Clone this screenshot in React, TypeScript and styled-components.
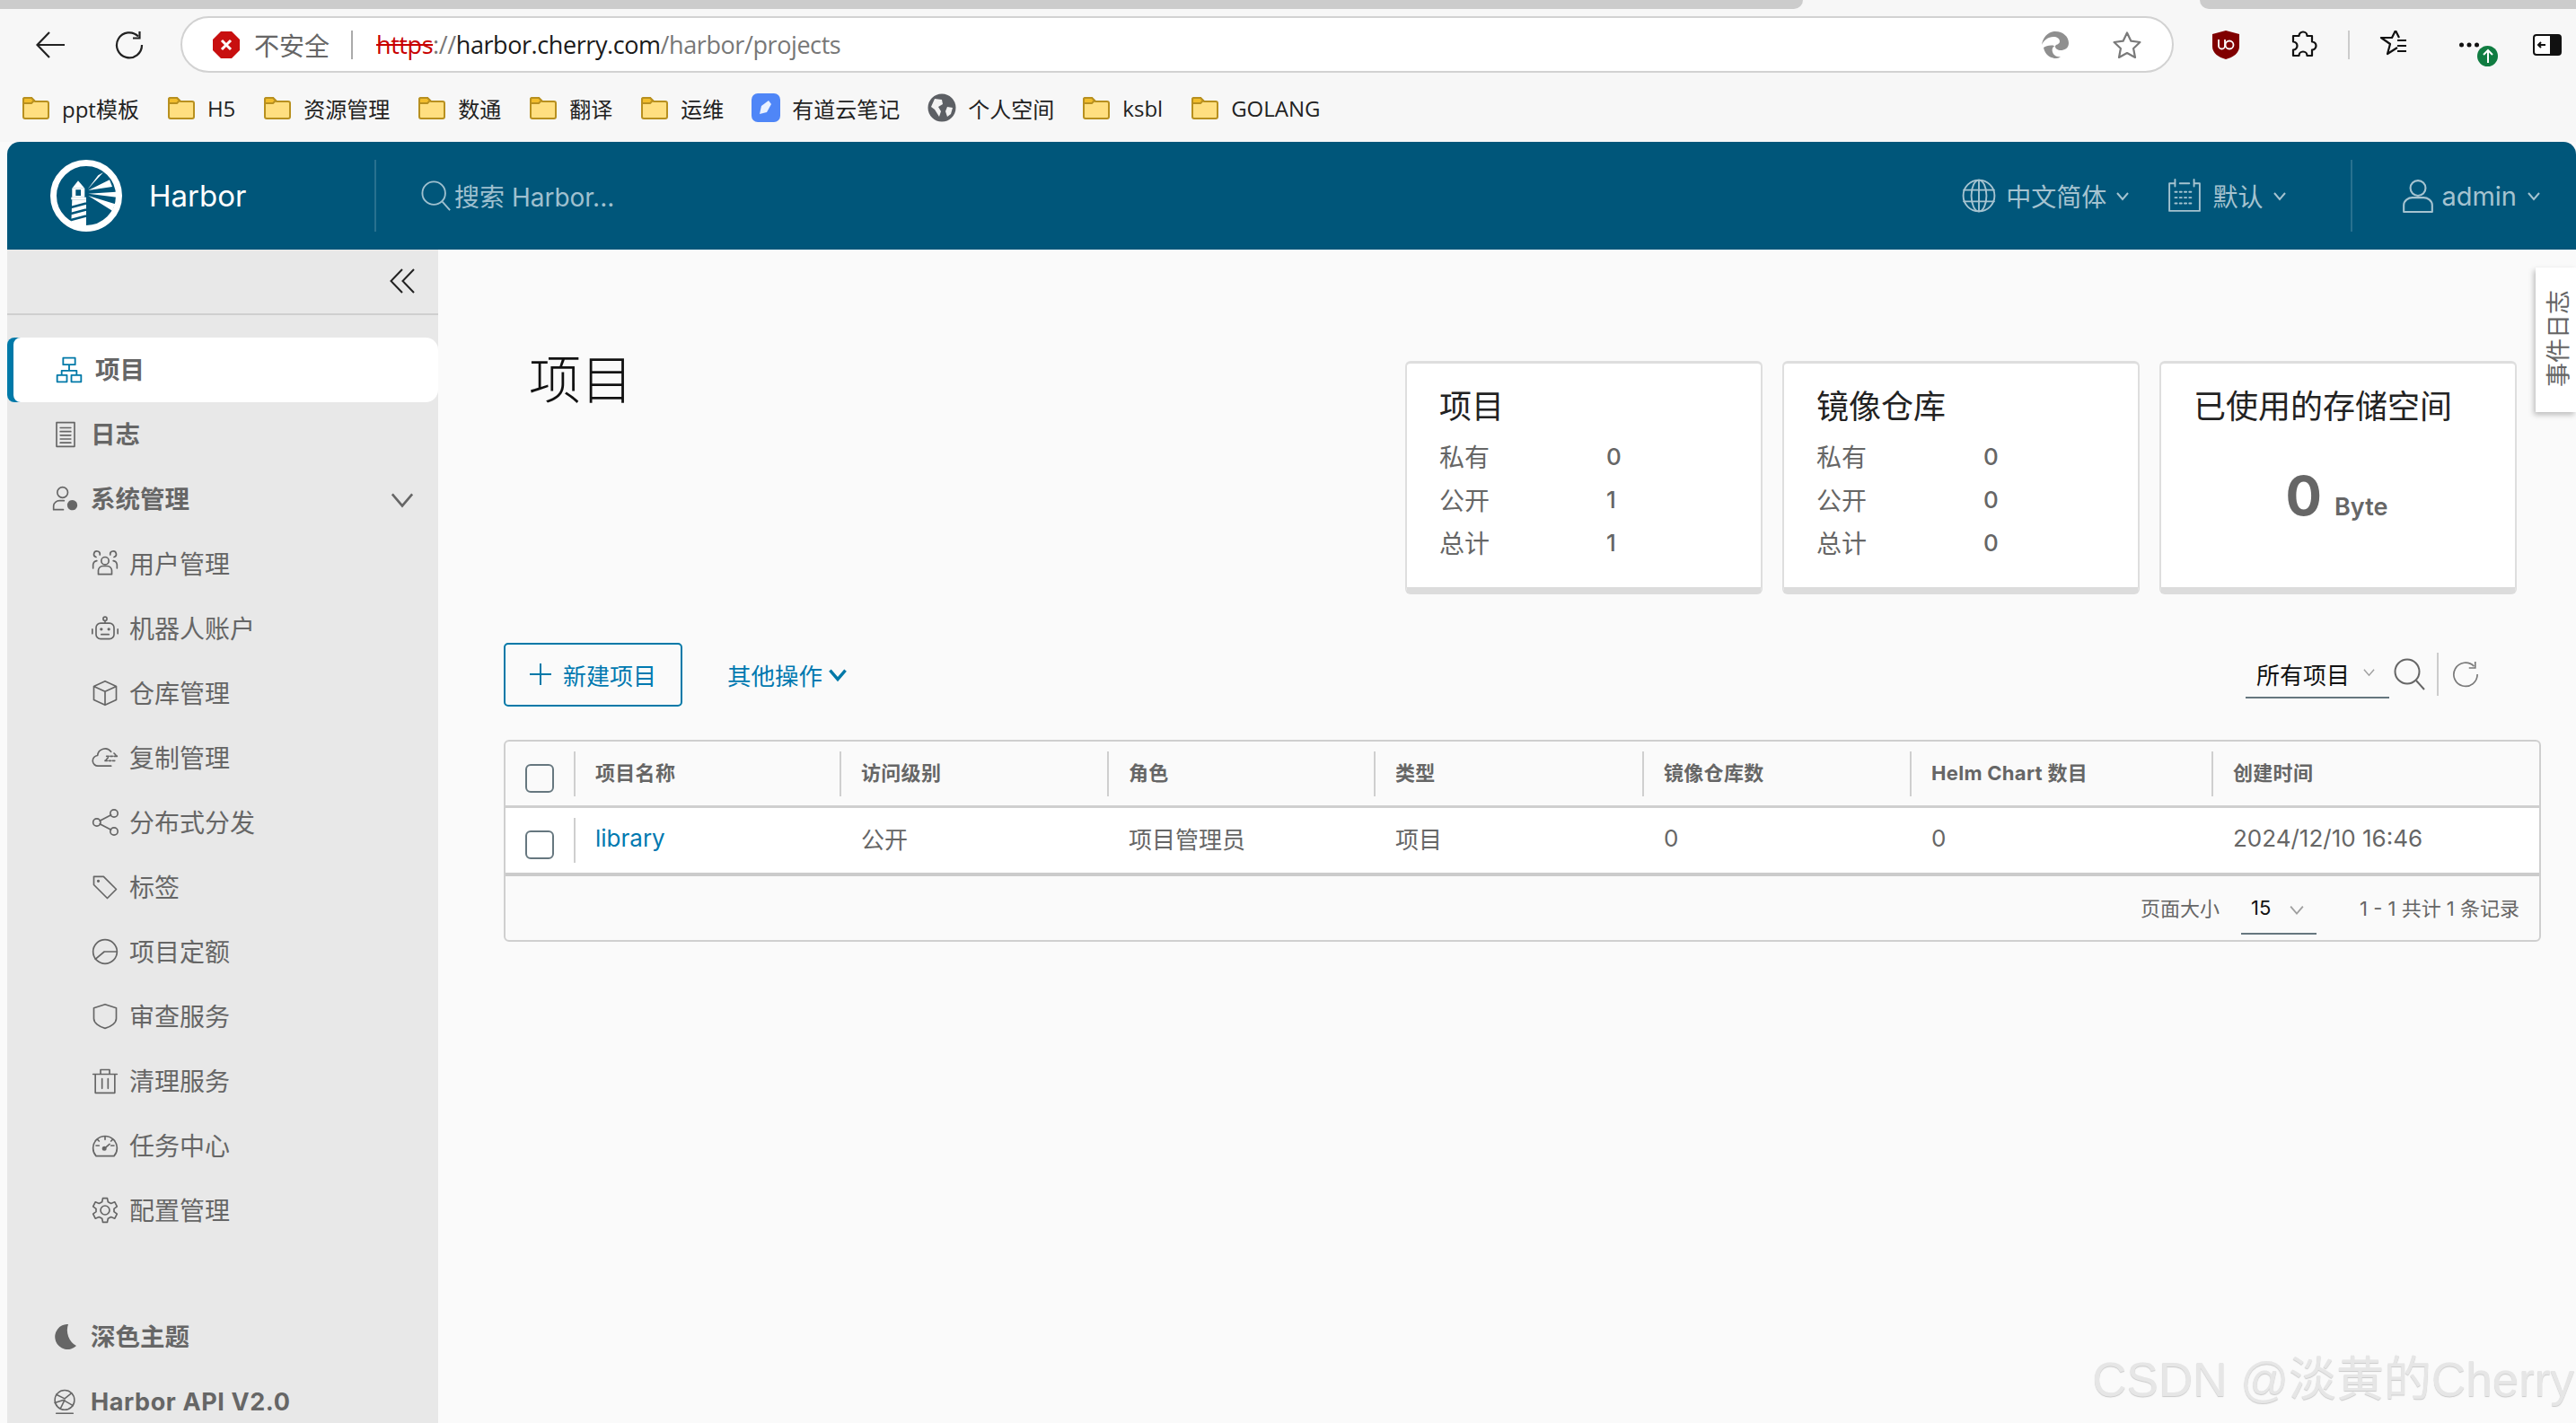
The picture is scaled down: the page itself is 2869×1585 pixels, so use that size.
import React from 'react';
import styled, { createGlobalStyle } from 'styled-components';

const GlobalStyle = createGlobalStyle`
  html, body {
    margin: 0;
    padding: 0;
    background: #fafafa;
    overflow: hidden;
  }
  * {
    box-sizing: border-box;
  }
  body {
    font-family: 'Inter', 'Noto Sans CJK SC', sans-serif;
  }
`;

const ui = `'Open Sans', 'Noto Sans CJK SC', sans-serif`;
const metro = `'Inter', 'Noto Sans CJK SC', sans-serif`;

/* ---- icons ---- */

type IconProps = { size?: number; color?: string };

const Svg = ({ size = 28, color = '#666', children, box = '0 0 36 36', sw = 2 }: IconProps & { children: React.ReactNode; box?: string; sw?: number }) => (
  <svg width={size} height={size} viewBox={box} fill="none" stroke={color} strokeWidth={sw} strokeLinecap="round" strokeLinejoin="round" style={{ flexShrink: 0 }}>
    {children}
  </svg>
);

const Chevron = ({ size = 14, color = '#a5c3d0', sw = 2 }: IconProps & { sw?: number }) => (
  <svg width={size} height={size} viewBox="0 0 14 14" fill="none" stroke={color} strokeWidth={sw} style={{ flexShrink: 0 }}>
    <path d="M1 4l6 7 6-7" />
  </svg>
);

const Folder = () => (
  <svg width="32" height="28" viewBox="0 0 32 28" style={{ flexShrink: 0 }}>
    <path d="M2 5a2 2 0 0 1 2-2h7l4 4h13a2 2 0 0 1 2 2v15a2 2 0 0 1-2 2H4a2 2 0 0 1-2-2z" fill="#ffdf80" stroke="#b8901f" strokeWidth="2" />
    <path d="M2 5a2 2 0 0 1 2-2h7l3 3-3 3H2z" fill="#f2bd2c" stroke="#b8901f" strokeWidth="2" />
  </svg>
);

const Youdao = () => (
  <svg width="32" height="32" viewBox="0 0 32 32" style={{ flexShrink: 0 }}>
    <rect width="32" height="32" rx="7" fill="#4f86f7" />
    <path d="M9 23l2-9 8-6 3 4-5 9z" fill="#eaf1ff" />
  </svg>
);

const GlobeBookmark = () => (
  <svg width="32" height="32" viewBox="0 0 32 32" style={{ flexShrink: 0 }}>
    <circle cx="16" cy="16" r="15.5" fill="#5c5f64" />
    <path d="M8 6l8 1 1 5-5 3 3 5-2 6-5-8-4-3zM22 15l6 1-2 7-4 3-2-6z" fill="#f2f2f2" />
  </svg>
);

const Logo = () => (
  <svg width="80" height="80" viewBox="0 0 80 80" style={{ flexShrink: 0 }}>
    <circle cx="40" cy="40" r="36.5" fill="none" stroke="#fff" strokeWidth="7" />
    <path d="M31 23.3l7.3 8.4H24.3z" fill="#fff" />
    <path fillRule="evenodd" d="M24.3 31.7h14v10h-14zM28.3 33.3V40H34v-6.700z" fill="#fff" />
    <rect x="23.300" y="41.700" width="16.700" height="2.600" fill="#fff" />
    <path d="M24.300 44.300H40V76l-16.700-5z" fill="#fff" />
    <path d="M23 53l17-4.500M23 60l17-4.500M23 67l17-4.500" stroke="#00567a" strokeWidth="2.600" />
    <path d="M41.700 32.700L53.300 17.300 59 14zM42.300 34L66 22.300 69 30zM42.300 37.700L73.300 35.700 74 41.700zM42.300 40L72.300 49.300 69 56.700z" fill="#fff" />
  </svg>
);

const SearchIcon = ({ size = 34, color = '#9fc0cf' }: IconProps) => (
  <svg width={size} height={size} viewBox="0 0 36 36" fill="none" stroke={color} strokeWidth="2" style={{ flexShrink: 0 }}>
    <circle cx="15" cy="15" r="13.5" />
    <path d="M25 25l9 10" />
  </svg>
);

const Refresh = ({ size = 32, color = '#222', sw = 2.2 }: IconProps & { sw?: number }) => (
  <svg width={size} height={size} viewBox="0 0 32 32" fill="none" stroke={color} strokeWidth={sw} style={{ flexShrink: 0 }}>
    <path d="M26 6.5A14 14 0 1 0 30 16" />
    <path d="M27.5 1v7.5H20" />
  </svg>
);

/* ---- browser chrome ---- */

const Browser = styled.div`
  background: #f7f7f7;
  height: 158px;
  display: flex;
  flex-direction: column;
`;

const TabStrip = styled.div`
  height: 10px;
  display: flex;
  justify-content: space-between;
`;

const TabEdge = styled.div<{ $w: number; $left?: boolean }>`
  width: ${(p) => p.$w}px;
  background: #cccccc;
  border-radius: ${(p) => (p.$left ? '0 0 0 10px' : '0 0 10px 0')};
`;

const Toolbar = styled.div`
  height: 63px;
  margin-top: 8px;
  display: flex;
  align-items: center;
  padding-left: 40px;
`;

const NavBtn = styled.div<{ $w: number }>`
  width: ${(p) => p.$w}px;
  display: flex;
`;

const AddressBar = styled.div`
  width: 2220px;
  height: 63px;
  background: #fff;
  border: 2px solid #d2d2d2;
  border-radius: 32px;
  display: flex;
  align-items: center;
  padding: 0 34px 0 34px;
  font-family: ${ui};
  font-size: 27px;
`;

const Insecure = styled.span`
  color: #666;
  font-size: 28px;
  margin-left: 16px;
  font-family: 'Noto Sans CJK SC', sans-serif;
  line-height: 1;
`;

const AddrSep = styled.div`
  width: 2px;
  height: 32px;
  background: #aaa;
  margin: 0 26px 0 24px;
`;

const Url = styled.div`
  flex: 1;
  color: #777;
  white-space: nowrap;
  letter-spacing: -0.42px;
`;

const UrlHttps = styled.s`
  color: #c80000;
`;

const UrlHost = styled.span`
  color: #1a1a1a;
`;

const AddrIcons = styled.div`
  display: flex;
  align-items: center;
  gap: 48px;
`;

const ExtIcons = styled.div`
  display: flex;
  align-items: center;
  margin-left: 43px;
`;

const ExtSlot = styled.div<{ $w: number }>`
  width: ${(p) => p.$w}px;
  display: flex;
  position: relative;
`;

const ToolSep = styled.div`
  width: 2px;
  height: 32px;
  background: #ccc;
  margin-right: 31px;
`;

const Badge = styled.div`
  position: absolute;
  left: 20px;
  top: 4px;
  width: 23px;
  height: 23px;
  border-radius: 50%;
  background: #107c41;
  display: flex;
  align-items: center;
  justify-content: center;
`;

const Bookmarks = styled.div`
  height: 42px;
  margin-top: 18px;
  display: flex;
  align-items: center;
  padding-left: 24px;
  gap: 31px;
`;

const Bookmark = styled.div`
  display: flex;
  align-items: center;
  gap: 13px;
  font-family: ${ui};
  font-size: 24px;
  color: #222;
  white-space: nowrap;
`;

/* ---- harbor header ---- */

const Page = styled.div`
  width: 2869px;
  height: 1585px;
  position: relative;
  overflow: hidden;
  background: #fafafa;
`;

const AppFrame = styled.div`
  margin-left: 8px;
  height: 1427px;
  display: flex;
  flex-direction: column;
`;

const Header = styled.header`
  height: 120px;
  flex-shrink: 0;
  background: #00567a;
  border-radius: 14px 14px 0 0;
  display: flex;
  align-items: center;
  padding-left: 48px;
  color: #a5c3d0;
`;

const Brand = styled.div`
  display: flex;
  align-items: center;
  gap: 30px;
  width: 361px;
  color: #fff;
  font-family: ${metro};
  font-size: 33px;
`;

const HeaderSep = styled.div`
  width: 2px;
  height: 80px;
  background: rgba(255, 255, 255, 0.16);
`;

const Search = styled.div`
  display: flex;
  align-items: center;
  gap: 3px;
  margin-left: 50px;
  flex: 1;
  font-family: ${metro};
  font-size: 28px;
  color: #9fc0cf;
`;

const HeaderItem = styled.div<{ $gap?: number; $start?: number; $size?: number; $inner?: number }>`
  display: flex;
  align-items: center;
  gap: ${(p) => p.$inner ?? 11}px;
  font-family: ${metro};
  font-size: ${(p) => p.$size ?? 28}px;
  margin-left: ${(p) => p.$start ?? 0}px;
  margin-right: ${(p) => p.$gap ?? 37}px;
`;

const HeaderCaret = styled.span`
  display: flex;
  margin-left: 5px;
`;

/* ---- sidebar ---- */

const Body = styled.div`
  flex: 1;
  display: flex;
  min-height: 0;
`;

const Sidebar = styled.aside`
  width: 480px;
  background: #e8e8e8;
  display: flex;
  flex-direction: column;
  overflow: hidden;
`;

const CollapseRow = styled.div`
  height: 73px;
  flex-shrink: 0;
  border-bottom: 2px solid #cfcfcf;
  display: flex;
  align-items: center;
  justify-content: flex-end;
  padding: 0 26px 2px 0;
`;

const NavList = styled.nav`
  padding-top: 25px;
  display: flex;
  flex-direction: column;
`;

const NavItem = styled.div<{ $active?: boolean; $sub?: boolean; $left?: number; $gap?: number }>`
  height: 72px;
  flex-shrink: 0;
  display: flex;
  align-items: center;
  gap: ${(p) => p.$gap ?? 14}px;
  padding-left: ${(p) => p.$left ?? 54}px;
  padding-right: 27px;
  font-family: 'Noto Sans CJK SC', sans-serif;
  font-size: ${(p) => (p.$sub ? 28 : 27.5)}px;
  font-weight: ${(p) => (p.$sub ? 400 : 700)};
  color: #666;
  background: ${(p) => (p.$active ? '#fff' : 'transparent')};
  border-radius: ${(p) => (p.$active ? '8px 14px 14px 8px' : '0')};
  box-shadow: ${(p) => (p.$active ? 'inset 7px 0 0 #0079a8' : 'none')};
`;

const NavLabel = styled.span`
  flex: 1;
  white-space: nowrap;
  line-height: 1;
  margin-top: -3px;
`;

const ApiLabel = styled(NavLabel)`
  font-family: ${metro};
  font-size: 27px;
  letter-spacing: 0.6px;
  margin-top: 0;
`;

const NavSpacer = styled.div`
  height: 69px;
  flex-shrink: 0;
`;

/* ---- main ---- */

const Main = styled.main`
  flex: 1;
  padding: 0 39px 0 73px;
  display: flex;
  flex-direction: column;
  position: relative;
`;

const TopRow = styled.div`
  display: flex;
  justify-content: space-between;
  align-items: flex-start;
  height: 437px;
  padding-top: 124px;
`;

const PageTitle = styled.h1`
  margin: -15px 0 0 28px;
  font-family: 'Noto Sans CJK SC', sans-serif;
  font-size: 58px;
  font-weight: 300;
  line-height: 64px;
  color: #111;
`;

const Cards = styled.div`
  display: flex;
  gap: 22px;
  margin-right: 27px;
`;

const Card = styled.section`
  width: 398px;
  height: 260px;
  background: #fff;
  border: 2px solid #dedede;
  border-top-width: 3px;
  border-bottom: 8px solid #dcdcdc;
  border-radius: 6px;
  padding: 23px 36px 0;
`;

const CardTitle = styled.div`
  font-family: 'Noto Sans CJK SC', sans-serif;
  font-size: 36px;
  line-height: 44px;
  font-weight: 400;
  color: #222;
  white-space: nowrap;
`;

const StatRows = styled.div`
  margin-top: 12px;
  display: grid;
  grid-template-columns: 186px 1fr;
  grid-auto-rows: 48px;
  align-items: center;
`;

const StatLabel = styled.div`
  font-family: 'Noto Sans CJK SC', sans-serif;
  font-size: 28px;
  color: #666;
`;

const StatValue = styled.div`
  font-family: ${metro};
  font-size: 26px;
  font-weight: 500;
  color: #666;
`;

const Storage = styled.div`
  display: flex;
  align-items: baseline;
  justify-content: center;
  gap: 14px;
  margin-top: 44px;
  padding-right: 3px;
  font-family: ${metro};
  color: #666;
`;

const StorageValue = styled.span`
  font-size: 60px;
  font-weight: 700;
`;

const StorageUnit = styled.span`
  font-size: 27px;
  font-weight: 600;
`;

const ActionRow = styled.div`
  height: 72px;
  display: flex;
  align-items: center;
`;

const NewButton = styled.button`
  width: 199px;
  height: 71px;
  background: transparent;
  border: 2px solid #0079a8;
  border-radius: 5px;
  display: flex;
  align-items: center;
  justify-content: center;
  gap: 13px;
  padding: 0;
  font-family: 'Noto Sans CJK SC', sans-serif;
  font-size: 26px;
  color: #0079b0;
`;

const MoreActions = styled.div`
  margin-left: 50px;
  display: flex;
  align-items: center;
  gap: 7px;
  font-family: 'Noto Sans CJK SC', sans-serif;
  font-size: 26.5px;
  color: #0079b0;
`;

const ActionSpacer = styled.div`
  flex: 1;
`;

const FilterSelect = styled.div`
  width: 160px;
  height: 46px;
  border-bottom: 2px solid #66777f;
  margin: 8px 5px 0 0;
  padding: 2px 0 0 12px;
  display: flex;
  align-items: flex-start;
  gap: 15px;
  font-family: 'Noto Sans CJK SC', sans-serif;
  font-size: 26px;
  line-height: 34px;
  color: #111;
`;

const ChevronWrap = styled.span`
  margin-top: 8px;
  display: flex;
`;

const ToolSepV = styled.div`
  width: 2px;
  height: 48px;
  background: #ccc;
  margin: 0 15px 0 12px;
`;

const ToolEnd = styled.div`
  width: 69px;
`;

const TableBox = styled.div`
  margin-top: 37px;
  height: 225px;
  border: 2px solid #cfcfcf;
  border-radius: 6px;
  display: flex;
  flex-direction: column;
  overflow: hidden;
`;

const columns = '76px 296px 298px 297px 299px 298px 336px 1fr';

const HeadRow = styled.div`
  height: 74px;
  display: grid;
  grid-template-columns: ${columns};
  align-items: center;
  border-bottom: 3px solid #cfcfcf;
`;

const DataRow = styled.div`
  height: 76px;
  display: grid;
  grid-template-columns: ${columns};
  align-items: center;
  background: #fff;
  border-bottom: 4px solid #cbcbcb;
`;

const CheckCell = styled.div`
  display: flex;
  justify-content: center;
  padding-top: 10px;
`;

const Check = styled.div`
  width: 32px;
  height: 32px;
  border: 2px solid #66777f;
  border-radius: 6px;
`;

const Cell = styled.div<{ $head?: boolean }>`
  height: 50px;
  border-left: 2px solid #cfcfcf;
  padding: 0 0 5px 22px;
  display: flex;
  align-items: center;
  white-space: nowrap;
  font-family: ${metro};
  font-size: ${(p) => (p.$head ? '22px' : '26px')};
  font-weight: ${(p) => (p.$head ? 700 : 400)};
  letter-spacing: ${(p) => (p.$head ? '0.3px' : '0')};
  color: #666;
`;

const PlainCell = styled(Cell)`
  border-left-color: transparent;
`;

const LinkText = styled.a`
  color: #0079b0;
`;

const Pager = styled.div`
  flex: 1;
  display: flex;
  align-items: center;
  justify-content: flex-end;
  padding: 0 22px 3px 0;
  font-family: ${metro};
  font-size: 22px;
  color: #666;
`;

const PageSelect = styled.div`
  width: 84px;
  height: 48px;
  margin: 13px 48px 0 24px;
  border-bottom: 2px solid #66777f;
  padding: 4px 0 0 11px;
  display: flex;
  align-items: flex-start;
  gap: 21px;
  color: #111;
  line-height: 28px;
`;

const EventTab = styled.div`
  position: absolute;
  right: 0;
  top: 298px;
  width: 45px;
  height: 161px;
  background: #fff;
  box-shadow: -2px 3px 6px rgba(0, 0, 0, 0.25);
  display: flex;
  align-items: center;
  justify-content: center;
`;

const EventText = styled.span`
  writing-mode: vertical-rl;
  text-orientation: sideways;
  transform: rotate(180deg);
  font-family: 'Noto Sans CJK SC', sans-serif;
  font-size: 27px;
  color: #666;
  white-space: nowrap;
  margin: 0 0 4px 2px;
`;

const Watermark = styled.div`
  position: absolute;
  right: 2px;
  top: 1505px;
  font-family: 'Liberation Sans', 'Noto Sans CJK SC', sans-serif;
  font-size: 53px;
  line-height: 64px;
  color: #e6e6e6;
  text-shadow: 0 1px 1px #c9c9c9;
  white-space: nowrap;
`;

/* ---- data ---- */

const subNav: [string, React.ReactNode][] = [
  ['用户管理', <><circle cx="18" cy="14" r="5" /><path d="M9 32v-5a6 6 0 0 1 6-6h6a6 6 0 0 1 6 6v5zM6 9a4 4 0 1 1 5-3M30 9a4 4 0 1 0-5-3M2 24v-5a6 6 0 0 1 5-5M34 24v-5a6 6 0 0 0-5-5" /></>],
  ['机器人账户', <><rect x="6" y="11" width="24" height="21" rx="6" /><circle cx="18" cy="5" r="2.5" /><path d="M18 8v3M13 26h10M1 19v6M35 19v6" /><circle cx="13" cy="19" r="1" /><circle cx="23" cy="19" r="1" /></>],
  ['仓库管理', <><path d="M18 2l15 7v18l-15 7-15-7V9zM3 9l15 7 15-7M18 16v18" /></>],
  ['复制管理', <><path d="M26 29H9a7 7 0 0 1-1-14 10 10 0 0 1 18-5" /><path d="M20 16h14M30 12l4 4M18 22h14M22 18l-4 4" strokeDasharray="3 2" /></>],
  ['分布式分发', <><circle cx="7" cy="18" r="5" /><circle cx="30" cy="6" r="5" /><circle cx="30" cy="30" r="5" /><path d="M11 16l15-8M11 20l15 8" /></>],
  ['标签', <><path d="M3 4h13l17 17-12 12L3 15z" /><circle cx="9" cy="10" r="1" /></>],
  ['项目定额', <><circle cx="18" cy="18" r="16" /><path d="M34 18H17l-12 10" /></>],
  ['审查服务', <><path d="M18 2l15 5v14c0 6-7 11-15 13-8-2-15-7-15-13V7z" /></>],
  ['清理服务', <><path d="M5 9h26v25H5zM2 9h32M12 9V3h12v6M14 15v13M22 15v13" /></>],
  ['任务中心', <><path d="M6 32a16 16 0 1 1 24 0z" /><path d="M18 6v4M6 18h4M26 18h4M8 10l2 2M28 10l-2 2M17 22l7-6" /><circle cx="17" cy="22" r="2" fill="#666" /></>],
  ['配置管理', <><circle cx="18" cy="18" r="6" /><path d="M15 2h6l1 5 4 2 5-2 3 6-4 3v4l4 3-3 6-5-2-4 2-1 5h-6l-1-5-4-2-5 2-3-6 4-3v-4l-4-3 3-6 5 2 4-2z" /></>],
];

const statRows = (a: string, b: string, c: string) => [
  ['私有', a],
  ['公开', b],
  ['总计', c],
];

const headers = ['项目名称', '访问级别', '角色', '类型', '镜像仓库数', 'Helm Chart 数目', '创建时间'];
const row = ['公开', '项目管理员', '项目', '0', '0', '2024/12/10 16:46'];
const bookmarks = ['ppt模板', 'H5', '资源管理', '数通', '翻译', '运维'];

const StatCard = ({ title, values }: { title: string; values: string[][] }) => (
  <Card>
    <CardTitle>{title}</CardTitle>
    <StatRows>
      {values.map(([label, value]) => (
        <React.Fragment key={label}>
          <StatLabel>{label}</StatLabel>
          <StatValue>{value}</StatValue>
        </React.Fragment>
      ))}
    </StatRows>
  </Card>
);

function App() {
  return (
    <Page>
      <GlobalStyle />
      <Browser>
        <TabStrip>
          <TabEdge $w={2008} />
          <TabEdge $w={419} $left />
        </TabStrip>
        <Toolbar>
          <NavBtn $w={88}>
            <svg width="32" height="30" viewBox="0 0 32 30" fill="none" stroke="#222" strokeWidth="2.2">
              <path d="M32 15H2M15 1L1.5 15 15 29" />
            </svg>
          </NavBtn>
          <NavBtn $w={73}>
            <Refresh />
          </NavBtn>
          <AddressBar>
            <svg width="30" height="30" viewBox="0 0 30 30">
              <path d="M9 0h12l9 9v12l-9 9H9l-9-9V9z" fill="#c80f0f" />
              <path d="M10 10l10 10M20 10L10 20" stroke="#fff" strokeWidth="3" />
            </svg>
            <Insecure>不安全</Insecure>
            <AddrSep />
            <Url>
              <UrlHttps>https</UrlHttps>://<UrlHost>harbor.cherry.com</UrlHost>/harbor/projects
            </Url>
            <AddrIcons>
              <svg width="32" height="32" viewBox="0 0 32 32">
                <path d="M16 1c9 0 15 6 15 13 0 6-5 8-9 8-3 0-6-2-6-4 0-3 5-2 5-6 0-3-3-5-7-5C8 7 3 11 1 16 2 8 8 1 16 1z" fill="#8f8f8f" />
                <path d="M3 19c1 6 6 12 14 12 2 0 4-1 5-2-5 1-8-2-9-5-1-3 0-6 3-7-6-1-10 0-13 2z" fill="#8f8f8f" />
              </svg>
              <svg width="32" height="30" viewBox="0 0 32 30" fill="none" stroke="#7a7a7a" strokeWidth="2.2" strokeLinejoin="round">
                <path d="M16 1.5l4.4 9.2 10 1.3-7.3 7 1.9 10L16 24l-9 5 1.9-10-7.3-7 10-1.3z" />
              </svg>
            </AddrIcons>
          </AddressBar>
          <ExtIcons>
            <ExtSlot $w={87}>
              <svg width="30" height="32" viewBox="0 0 30 32">
                <path d="M15 0l15 4v14c0 7-7 12-15 14C7 30 0 25 0 18V4z" fill="#800000" />
                <path d="M7 10v7a3.500 3.500 0 0 0 7 0v-7" fill="none" stroke="#fff" strokeWidth="1.800" />
                <circle cx="19" cy="16" r="4.500" fill="none" stroke="#fff" strokeWidth="1.800" />
              </svg>
            </ExtSlot>
            <ExtSlot $w={64}>
              <svg width="30" height="32" viewBox="0 0 30 32" fill="none" stroke="#111" strokeWidth="2.2" strokeLinejoin="round">
                <path d="M3 6h6.500a4.500 4.500 0 1 1 9 0H24v6.500a4.500 4.500 0 1 1 0 9V28h-5.500a4.500 4.500 0 1 0-9 0H3v-6.500a4.500 4.500 0 1 0 0-9z" />
              </svg>
            </ExtSlot>
            <ToolSep />
            <ExtSlot $w={91}>
              <svg width="34" height="32" viewBox="0 0 34 32" fill="none" stroke="#111" strokeWidth="2.2" strokeLinejoin="round">
                <path d="M22 19l-11 7 3-11-10-7h12l4-8 4 8" />
                <path d="M22 11h10M22 17h10M22 23h10" />
              </svg>
            </ExtSlot>
            <ExtSlot $w={82}>
              <svg width="22" height="6" viewBox="0 0 22 6" fill="#111">
                <circle cx="2.500" cy="3" r="2.500" />
                <circle cx="11" cy="3" r="2.500" />
                <circle cx="19.500" cy="3" r="2.500" />
              </svg>
              <Badge>
                <svg width="12" height="16" viewBox="0 0 12 16" fill="none" stroke="#fff" strokeWidth="2">
                  <path d="M6 16V2M1 7l5-5 5 5" />
                </svg>
              </Badge>
            </ExtSlot>
            <svg width="32" height="24" viewBox="0 0 32 24">
              <rect x="1" y="1" width="30" height="22" rx="3" fill="#fff" stroke="#111" strokeWidth="2" />
              <path d="M19 1h9a3 3 0 0 1 3 3v16a3 3 0 0 1-3 3h-9z" fill="#111" />
              <path d="M14 12H6M9 9l-3 3 3 3" fill="none" stroke="#111" strokeWidth="2" />
            </svg>
          </ExtIcons>
        </Toolbar>
        <Bookmarks>
          {bookmarks.map((name) => (
            <Bookmark key={name}>
              <Folder />
              {name}
            </Bookmark>
          ))}
          <Bookmark>
            <Youdao />
            有道云笔记
          </Bookmark>
          <Bookmark>
            <GlobeBookmark />
            个人空间
          </Bookmark>
          <Bookmark>
            <Folder />
            ksbl
          </Bookmark>
          <Bookmark>
            <Folder />
            GOLANG
          </Bookmark>
        </Bookmarks>
      </Browser>

      <AppFrame>
        <Header>
          <Brand>
            <Logo />
            Harbor
          </Brand>
          <HeaderSep />
          <Search>
            <SearchIcon />
            搜索 Harbor...
          </Search>
          <HeaderItem $gap={43}>
            <Svg size={38} color="#a5c3d0" sw={1.8}>
              <circle cx="18" cy="18" r="16.5" />
              <ellipse cx="18" cy="18" rx="8" ry="16.5" />
              <path d="M18 1.500v33M2 12h32M2 24h32" />
            </Svg>
            中文简体
            <Chevron />
          </HeaderItem>
          <HeaderItem $gap={72} $inner={12}>
            <Svg size={38} color="#a5c3d0" sw={1.8}>
              <path d="M8 5H2v29h32V5h-6M13 5h10M8 1v7M28 1v7" />
              <path d="M8 14h20M8 20h20M8 26h20" strokeDasharray="2 3" />
            </Svg>
            默认
            <Chevron />
          </HeaderItem>
          <HeaderSep />
          <HeaderItem $gap={40} $start={54} $size={29} $inner={7}>
            <Svg size={38} color="#a5c3d0" sw={2}>
              <circle cx="18" cy="10" r="8" />
              <path d="M3 35v-7c0-5 5-8 9-8h12c4 0 9 3 9 8v7z" />
            </Svg>
            admin
            <HeaderCaret>
              <Chevron />
            </HeaderCaret>
          </HeaderItem>
        </Header>

        <Body>
          <Sidebar>
            <CollapseRow>
              <svg width="28" height="28" viewBox="0 0 28 28" fill="none" stroke="#222" strokeWidth="2">
                <path d="M14 1L1.500 14 14 27M27 1L14.500 14 27 27" />
              </svg>
            </CollapseRow>
            <NavList>
              <NavItem $active>
                <Svg size={30} color="#0079a8" sw={2.2}>
                  <path d="M10 2h16v9H10zM2 25h13v9H2zM21 25h13v9H21zM18 11v8M8 25v-6h20v6" />
                </Svg>
                <NavLabel>项目</NavLabel>
              </NavItem>
              <NavItem $left={50} $gap={13}>
                <Svg size={30} sw={2}>
                  <path d="M6 2h24v32H6zM11 9h14M11 14h14M11 19h14M11 24h14M11 29h14" />
                </Svg>
                <NavLabel>日志</NavLabel>
              </NavItem>
              <NavItem $left={50} $gap={13}>
                <Svg size={30} sw={2}>
                  <circle cx="14" cy="9" r="7" />
                  <path d="M2 32v-5c0-4 4-7 8-7h6M2 32h13" />
                  <circle cx="27" cy="26" r="5" fill="#666" strokeWidth="3.600" strokeDasharray="2.400 1.400" />
                </Svg>
                <NavLabel>系统管理</NavLabel>
                <Chevron size={26} color="#666" sw={1.4} />
              </NavItem>
              {subNav.map(([label, icon]) => (
                <NavItem key={label} $sub $left={94} $gap={12}>
                  <Svg size={30}>{icon}</Svg>
                  <NavLabel>{label}</NavLabel>
                </NavItem>
              ))}
              <NavSpacer />
              <NavItem $left={53} $gap={16}>
                <svg width="24" height="28" viewBox="0 0 24 28" fill="#666" style={{ flexShrink: 0 }}>
                  <path d="M15 0A14 14 0 1 0 24 24 20 20 0 0 1 15 0z" />
                </svg>
                <NavLabel>深色主题</NavLabel>
              </NavItem>
              <NavItem $left={50} $gap={15}>
                <Svg size={28} sw={2}>
                  <circle cx="18" cy="16" r="14" />
                  <path d="M6 8l12 6 10-8M4 20l12-4 14 8M12 28l6-12M6 35h24" />
                </Svg>
                <ApiLabel>Harbor API V2.0</ApiLabel>
              </NavItem>
            </NavList>
          </Sidebar>

          <Main>
            <TopRow>
              <PageTitle>项目</PageTitle>
              <Cards>
                <StatCard title="项目" values={statRows('0', '1', '1')} />
                <StatCard title="镜像仓库" values={statRows('0', '0', '0')} />
                <Card>
                  <CardTitle>已使用的存储空间</CardTitle>
                  <Storage>
                    <StorageValue>0</StorageValue>
                    <StorageUnit>Byte</StorageUnit>
                  </Storage>
                </Card>
              </Cards>
            </TopRow>

            <ActionRow>
              <NewButton>
                <svg width="24" height="24" viewBox="0 0 24 24" stroke="#0079a8" strokeWidth="2">
                  <path d="M12 0v24M0 12h24" />
                </svg>
                新建项目
              </NewButton>
              <MoreActions>
                其他操作
                <Chevron size={20} color="#0079a8" sw={2.4} />
              </MoreActions>
              <ActionSpacer />
              <FilterSelect>
                所有项目
                <ChevronWrap>
                  <Chevron size={13} color="#a0a0a0" sw={1.6} />
                </ChevronWrap>
              </FilterSelect>
              <SearchIcon size={36} color="#666" />
              <ToolSepV />
              <Refresh size={30} color="#7a7a7a" sw={1.8} />
              <ToolEnd />
            </ActionRow>

            <TableBox>
              <HeadRow>
                <CheckCell>
                  <Check />
                </CheckCell>
                {headers.map((h) => (
                  <Cell key={h} $head>
                    {h}
                  </Cell>
                ))}
              </HeadRow>
              <DataRow>
                <CheckCell>
                  <Check />
                </CheckCell>
                <Cell>
                  <LinkText>library</LinkText>
                </Cell>
                {row.map((v, i) => (
                  <PlainCell key={i}>{v}</PlainCell>
                ))}
              </DataRow>
              <Pager>
                页面大小
                <PageSelect>
                  15
                  <ChevronWrap>
                    <Chevron size={16} color="#a0a0a0" sw={1.6} />
                  </ChevronWrap>
                </PageSelect>
                1 - 1 共计 1 条记录
              </Pager>
            </TableBox>
          </Main>
        </Body>
      </AppFrame>

      <EventTab>
        <EventText>事件日志</EventText>
      </EventTab>
      <Watermark>CSDN @淡黄的Cherry</Watermark>
    </Page>
  );
}

export default App;
